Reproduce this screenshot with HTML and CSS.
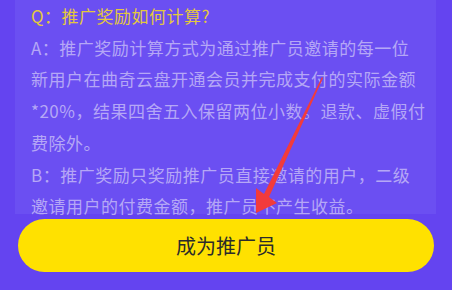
FILE: index.html
```html
<!DOCTYPE html>
<html lang="zh-CN">
<head>
    <meta charset="UTF-8">
    <meta name="viewport" content="width=device-width, initial-scale=1.0">
    <title>推广员说明</title>
    <link rel="stylesheet" href="styles.css">
</head>
<body>
    <div class="page">
        <div class="faq">
            <p class="question">Q：推广奖励如何计算?</p>
            <p class="answer">A：推广奖励计算方式为通过推广员邀请的每一位<br>新用户在曲奇云盘开通会员并完成支付的实际金额<br>*20%，结果四舍五入保留两位小数。退款、虚假付<br>费除外。</p>
            <p class="answer">B：推广奖励只奖励推广员直接邀请的用户，二级<br>邀请用户的付费金额，推广员不产生收益。</p>
        </div>
        <button type="button" class="join-btn">成为推广员</button>
        <svg class="pointer" width="452" height="290" viewBox="0 0 452 290">
            <polygon points="322,77 323,78 269,197 277,203 256,213 256,188 264,194" fill="#f23b3b" />
        </svg>
    </div>
</body>
</html>
```

FILE: styles.css
```css
body {
    margin: 0;
    background-color: #6444f0;
    font-family: "Noto Sans CJK SC", "Noto Sans", sans-serif;
    overflow: hidden;
}
.page {
    position: relative;
    width: 452px;
    height: 290px;
    display: flex;
    flex-direction: column;
    align-items: center;
}
.faq {
    width: 421px;
    height: 214px;
    margin-left: -1px;
    padding: 0 4px 0 16px;
    box-sizing: border-box;
    background-color: #6b4ff2;
}
.faq p {
    margin: 0;
    font-size: 17px;
    line-height: 31.7px;
    letter-spacing: 0.5px;
    white-space: nowrap;
}
.question {
    color: #e4c83e;
}
.answer {
    color: #b5a7f6;
}
.join-btn {
    position: relative;
    width: 416px;
    height: 53px;
    margin-top: 5px;
    border: none;
    border-radius: 27px;
    background-color: #ffe100;
    color: #2b2b2b;
    font-family: inherit;
    font-size: 20px;
    cursor: pointer;
}
.pointer {
    position: absolute;
    left: 0;
    top: 0;
    pointer-events: none;
}
```
